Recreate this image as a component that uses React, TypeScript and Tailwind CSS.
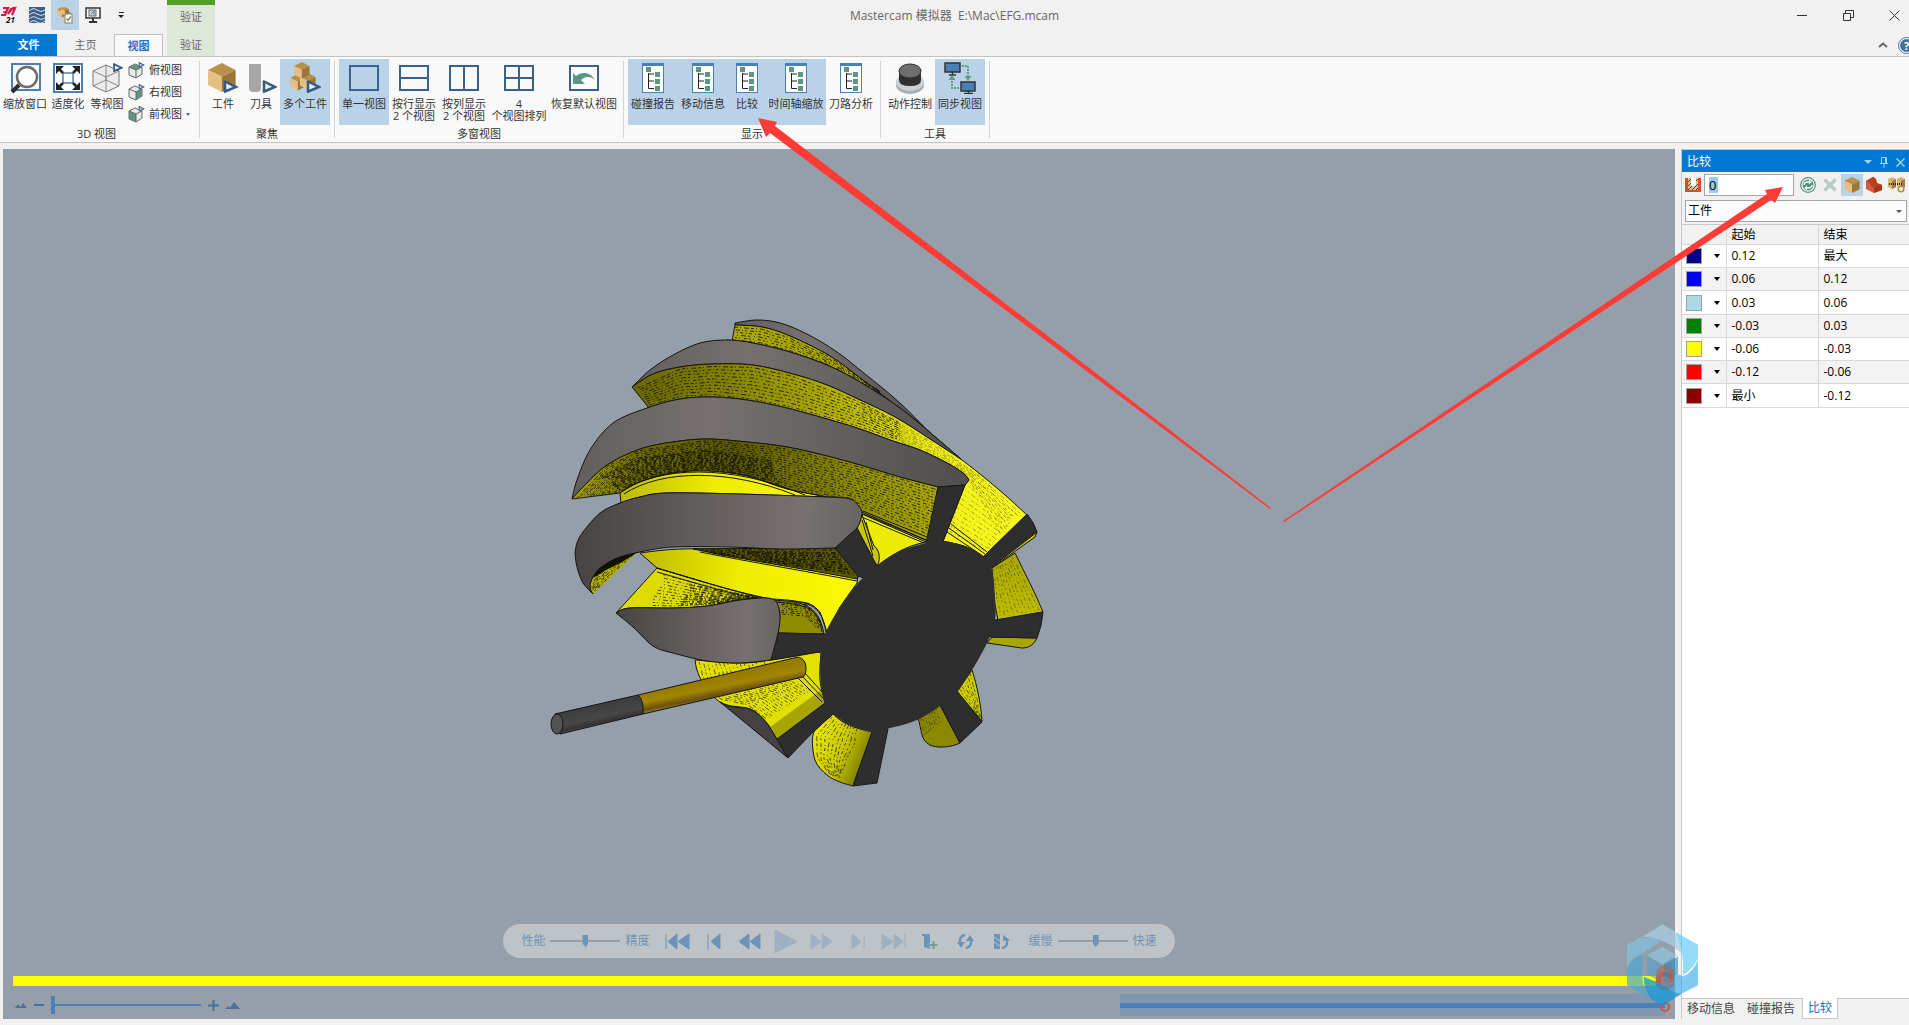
import { useState } from 'react';
import type { ReactNode } from 'react';
import clsx from 'clsx';

type Point = [number, number];

const RANGES = [
  { name: '深蓝', swatch: 'bg-[#00008b]', start: '0.12', end: '最大' },
  { name: '蓝', swatch: 'bg-[#0000ff]', start: '0.06', end: '0.12' },
  { name: '浅蓝', swatch: 'bg-[#add8e6]', start: '0.03', end: '0.06' },
  { name: '绿', swatch: 'bg-[#008000]', start: '-0.03', end: '0.03' },
  { name: '黄', swatch: 'bg-[#ffff00]', start: '-0.06', end: '-0.03' },
  { name: '红', swatch: 'bg-[#ff0000]', start: '-0.12', end: '-0.06' },
  { name: '深红', swatch: 'bg-[#8b0000]', start: '最小', end: '-0.12' },
];

/* ---------- geometry helpers for the 3D scene ---------- */

function curveTo(points: Point[]) {
  let d = '';
  for (let i = 0; i < points.length - 1; i++) {
    const p0 = points[i - 1] ?? points[i];
    const p1 = points[i];
    const p2 = points[i + 1];
    const p3 = points[i + 2] ?? p2;
    const c1 = [p1[0] + (p2[0] - p0[0]) / 6, p1[1] + (p2[1] - p0[1]) / 6];
    const c2 = [p2[0] - (p3[0] - p1[0]) / 6, p2[1] - (p3[1] - p1[1]) / 6];
    d += `C${c1[0].toFixed(1)} ${c1[1].toFixed(1)} ${c2[0].toFixed(1)} ${c2[1].toFixed(1)} ${p2[0]} ${p2[1]}`;
  }
  return d;
}

// every segment is smoothed on its own, corners stay where two segments meet
function shape(...segments: Point[][]) {
  return (
    segments
      .map((seg, i) => `${i === 0 ? 'M' : 'L'}${seg[0][0]} ${seg[0][1]}${curveTo(seg)}`)
      .join('') + 'Z'
  );
}

function pointAt(points: Point[], t: number): Point {
  const pos = t * (points.length - 1);
  const i = Math.min(Math.floor(pos), points.length - 2);
  const f = pos - i;
  return [
    points[i][0] + (points[i + 1][0] - points[i][0]) * f,
    points[i][1] + (points[i + 1][1] - points[i][1]) * f,
  ];
}

const DASHES = ['3 2 1 3 5 2', '2 3 4 2 1 2', '1 2 3 3', '5 2 2 4 1 3', '2 2 1 4 3 2'];

function Hatch({ from, to, count, opacity = 0.8, width = 1 }: {
  from: Point[];
  to: Point[];
  count: number;
  opacity?: number;
  width?: number;
}) {
  return (
    <g fill="none" stroke="#0c0c00" strokeWidth={width} opacity={opacity}>
      {Array.from({ length: count }, (_, n) => {
        const k = (n + 0.5) / count;
        const line = Array.from({ length: 13 }, (_, s): Point => {
          const a = pointAt(from, s / 12);
          const b = pointAt(to, s / 12);
          return [Math.round(a[0] + (b[0] - a[0]) * k), a[1] + (b[1] - a[1]) * k];
        });
        return (
          <path
            key={n}
            d={`M${line[0][0]} ${line[0][1]}${curveTo(line)}`}
            strokeDasharray={DASHES[n % DASHES.length]}
            strokeDashoffset={n * 3}
          />
        );
      })}
    </g>
  );
}

const land2Top: Point[] = [[632, 387], [650, 370], [673, 355], [700, 343], [727, 340], [753, 343], [790, 352], [827, 365], [860, 382], [900, 408], [940, 441], [962, 460]];
const land2Bottom: Point[] = [[632, 387], [653, 374], [680, 367], [713, 364], [753, 365], [793, 374], [827, 385], [860, 400], [895, 417], [930, 439], [962, 460]];
const land3Top: Point[] = [[572, 499], [577, 480], [590, 450], [613, 423], [647, 408], [680, 399], [713, 397], [747, 400], [787, 408], [827, 419], [860, 429], [893, 441], [920, 450], [947, 463], [963, 473], [969, 480]];
const land3Bottom: Point[] = [[938, 487], [900, 477], [860, 465], [827, 456], [787, 447], [747, 442], [707, 439], [673, 442], [640, 449], [607, 465], [583, 487], [572, 499]];
const land4Top: Point[] = [[575, 553], [577, 543], [583, 532], [600, 513], [620, 503], [640, 497], [667, 493], [740, 494], [827, 497], [850, 499], [858, 505], [862, 512], [860, 522], [857, 528]];
const land4Bottom: Point[] = [[835, 548], [780, 549], [730, 547], [673, 547], [640, 552], [617, 558], [600, 568], [593, 577], [590, 587], [593, 594]];
const land5Top: Point[] = [[616, 613], [630, 608], [673, 608], [707, 606], [740, 600], [767, 598], [777, 603], [780, 617], [778, 633], [771, 660]];
const land5Bottom: Point[] = [[771, 660], [740, 663], [707, 661], [673, 653], [653, 646], [633, 627], [616, 613]];
const faceDisc: Point[] = [[926, 543], [943, 541], [967, 547], [983, 557], [992, 570], [995, 597], [995, 620], [987, 643], [972, 670], [957, 691], [940, 706], [917, 720], [890, 728], [870, 731], [850, 725], [833, 714], [824, 702], [820, 670], [821, 653], [825, 634], [840, 607], [858, 583], [877, 566], [900, 551], [926, 543]];

function CutterScene() {
  return (
    <svg className="absolute inset-0 h-full w-full" viewBox="3 149 1672 870" role="img" aria-label="工件">
      <defs>
        <linearGradient id="land" x1="0" x2="1">
          <stop offset="0" stopColor="#625e5d" />
          <stop offset=".35" stopColor="#767170" />
          <stop offset="1" stopColor="#504d4d" />
        </linearGradient>
        <linearGradient id="landLow" x1="0" x2="1">
          <stop offset="0" stopColor="#474443" />
          <stop offset=".5" stopColor="#666160" />
          <stop offset=".8" stopColor="#777271" />
          <stop offset="1" stopColor="#676362" />
        </linearGradient>
        <linearGradient id="flute2" gradientUnits="userSpaceOnUse" x1="632" x2="1020" y1="0" y2="0">
          <stop offset="0" stopColor="#686500" />
          <stop offset=".25" stopColor="#858200" />
          <stop offset=".55" stopColor="#b6b300" />
          <stop offset=".78" stopColor="#f2f018" />
          <stop offset="1" stopColor="#f8f720" />
        </linearGradient>
        <linearGradient id="flute3" x1="0" x2="1">
          <stop offset="0" stopColor="#a5a206" />
          <stop offset=".2" stopColor="#6b6900" />
          <stop offset=".45" stopColor="#5c5a00" />
          <stop offset=".75" stopColor="#8c8900" />
          <stop offset="1" stopColor="#a9a600" />
        </linearGradient>
        <linearGradient id="bright" x1="0" x2="1">
          <stop offset="0" stopColor="#bdba00" />
          <stop offset=".45" stopColor="#eeec00" />
          <stop offset="1" stopColor="#fafa05" />
        </linearGradient>
        <linearGradient id="low" x1="0" x2="1" y1="0" y2=".5">
          <stop offset="0" stopColor="#f5f500" />
          <stop offset=".6" stopColor="#c9c700" />
          <stop offset="1" stopColor="#777500" />
        </linearGradient>
        <linearGradient id="right" x1="0" x2="0" y1="0" y2="1">
          <stop offset="0" stopColor="#a9a700" />
          <stop offset="1" stopColor="#c0be00" />
        </linearGradient>
        <linearGradient id="gold" gradientUnits="userSpaceOnUse" x1="715" x2="720" y1="675" y2="700">
          <stop offset="0" stopColor="#947800" />
          <stop offset=".5" stopColor="#a38500" />
          <stop offset=".8" stopColor="#6b5014" />
          <stop offset="1" stopColor="#ad9420" />
        </linearGradient>
        <linearGradient id="shank" gradientUnits="userSpaceOnUse" x1="597" x2="602" y1="704" y2="726">
          <stop offset="0" stopColor="#3c3c3c" />
          <stop offset=".6" stopColor="#474747" />
          <stop offset=".85" stopColor="#343232" />
          <stop offset="1" stopColor="#8a8584" />
        </linearGradient>
      </defs>

      {/* upper flutes and lands */}
      <g stroke="#141414" strokeWidth="1" strokeLinejoin="round">
        <path
          d={shape([[735, 323], [757, 320], [780, 323], [807, 334], [837, 352], [865, 374], [900, 403], [937, 440]], [[895, 406], [860, 378], [830, 356], [790, 336], [762, 327], [735, 325]])}
          fill="url(#land)"
        />
        <path
          d={shape([[735, 325], [762, 327], [790, 336], [830, 356], [860, 378], [895, 405], [937, 441], [962, 460]], [...land2Top].reverse().slice(0, 8), [[732, 341], [735, 325]])}
          fill="#aaa700"
        />
        <Hatch from={[[735, 326], [762, 328], [790, 337], [830, 357], [880, 391]]} to={[[732, 341], [760, 344], [790, 352], [827, 365], [880, 394]]} count={6} />
        <path d={shape(land2Top, [...land2Bottom].reverse())} fill="url(#land)" />
        <path
          d={shape(land2Bottom, [[962, 460], [980, 474], [1005, 495], [1027, 515]], [[983, 557], [967, 547], [943, 541]], [[965, 485], [969, 480]], [...land3Top].reverse().slice(0, 12), [[649, 408], [632, 387]])}
          fill="url(#flute2)"
        />
        <Hatch
          from={[[637, 387], [680, 368], [713, 365], [753, 366], [793, 375], [860, 401], [900, 422]]}
          to={[[650, 406], [680, 398], [713, 396], [753, 401], [793, 409], [860, 428], [900, 441]]}
          count={10}
        />
        <Hatch from={[[860, 401], [930, 440], [980, 476], [1021, 512]]} to={[[860, 428], [915, 448], [965, 475], [1000, 536]]} count={9} opacity={0.35} />
        <Hatch from={[[972, 474], [1018, 513]]} to={[[946, 532], [985, 553]]} count={13} opacity={0.35} />
        <path d="M951 524L987 552M949 528L985 554M947 532L983 556" fill="none" />
        <path d={shape(land3Top, [[969, 480], [965, 485]], land3Bottom)} fill="url(#land)" />
      </g>

      {/* third flute with its bright floor */}
      <g stroke="#141414" strokeWidth="1" strokeLinejoin="round">
        <path
          d={shape([...land3Bottom].reverse(), [[938, 487], [928, 541]], [[862, 512], [850, 499], [827, 497]], [[787, 489], [747, 476], [707, 471], [673, 473], [640, 482], [620, 493]], [[620, 493], [572, 499]])}
          fill="url(#flute3)"
        />
        <Hatch
          from={[[576, 498], [607, 466], [640, 450], [707, 440], [787, 448], [860, 466], [936, 488]]}
          to={[[615, 493], [620, 492], [645, 479], [707, 470], [787, 487], [862, 508], [929, 536]]}
          count={17}
        />
        <Hatch
          from={[[600, 476], [640, 457], [707, 450], [770, 460]]}
          to={[[620, 491], [645, 479], [707, 469], [780, 483]]}
          count={9}
          width={2}
          opacity={0.6}
        />
        <path
          d={shape([[620, 493], [640, 482], [673, 473], [707, 471], [747, 476], [787, 489], [827, 497]], [[740, 494], [667, 493], [640, 497], [621, 503]])}
          fill="url(#bright)"
        />
        <path d="M622 491C660 466 730 464 805 495M624 494C662 469 730 469 795 495" fill="none" />
        <path d="M862 514L926 542C905 546 890 556 877 566L866 530Z" fill="#eceb04" />
        <path d="M863 511L927 537M863 514L926 540M864 518L924 543" fill="none" />
        <path d="M862 515L857 528L872 558L877 566C882 558 878 548 874 546Z" fill="#c9c700" />
        <path d="M866 522L873 550M862 520L873 556" fill="none" />
      </g>

      {/* fourth flute */}
      <g stroke="#141414" strokeWidth="1" strokeLinejoin="round">
        <path d="M586 586L593 594L637 553L615 556L598 566L589 578Z" fill="#b4b100" stroke="none" />
        <Hatch from={[[617, 557], [600, 568], [591, 587]]} to={[[634, 555], [614, 573], [595, 592]]} count={8} width={1} />
        <path d="M638 552L617 556L598 566L593 578L606 570L622 562Z" fill="#111100" stroke="none" />
        <path d={shape([[640, 553], [683, 549], [780, 549], [835, 548]], [[858, 576], [857, 583]], [[840, 607], [827, 632]], [[820, 612], [807, 603], [773, 600], [740, 593], [700, 581], [657, 568]])} fill="url(#bright)" />
        <path d="M693 549L835 548L858 576L857 579C800 568 745 560 693 549Z" fill="#5d5b00" />
        <Hatch from={[[700, 550], [770, 549], [834, 549]]} to={[[720, 555], [790, 566], [856, 576]]} count={11} />
        <Hatch from={[[740, 551], [800, 552], [836, 552]]} to={[[770, 562], [810, 568], [852, 574]]} count={7} width={2} opacity={0.6} />
        <path d="M700 552C750 562 805 571 857 581" fill="none" />
        <path
          d={shape([[657, 568], [700, 581], [740, 592], [773, 600], [777, 603]], [[767, 598], [740, 600], [707, 606], [673, 608], [630, 608], [616, 613]])}
          fill="#dddb00"
        />
        <Hatch from={[[664, 573], [700, 583], [735, 592], [765, 598]]} to={[[650, 607], [673, 607], [707, 605], [750, 599]]} count={11} opacity={0.7} />
        <Hatch from={[[690, 583], [735, 593], [768, 599]]} to={[[680, 606], [715, 604], [750, 600]]} count={8} width={2} opacity={0.6} />
        <path d="M656 568C700 580 735 593 775 600M657 572C700 584 735 596 768 600" fill="none" />
        <path d="M773 600C800 602 818 602 824 634L778 633L780 615Z" fill="#8f8c00" />
        <Hatch from={[[778, 601], [807, 604], [822, 622]]} to={[[781, 615], [805, 617], [818, 630]]} count={7} />
        <path d="M773 599C806 601 822 603 826 632M776 602C804 605 818 606 822 632" fill="none" />
      </g>

      {/* right side teeth */}
      <g stroke="#141414" strokeWidth="1" strokeLinejoin="round">
        <path d="M1037 532L1035 537L993 567L990 560Z" fill="#c4c200" />
        <path d="M992 568L1015 553C1024 572 1035 592 1043 612L998 620L994 600Z" fill="url(#right)" />
        <Hatch from={[[1013, 556], [1028, 584], [1041, 610]]} to={[[993, 569], [995, 596], [999, 618]]} count={10} opacity={0.4} />
        <path d="M992 637L1037 638C1034 644 1030 648 1022 648L987 643Z" fill="#a8a600" />
        <path d="M972 670C977 686 981 704 982 721L957 692Z" fill="#cfcd00" />
        <Hatch from={[[971, 672], [977, 695], [981, 718]]} to={[[958, 690], [967, 702], [978, 716]]} count={6} opacity={0.6} />
        <path d="M918 718L940 705L960 743C950 748 936 748 930 745C920 740 922 730 918 718Z" fill="#8c8900" />
        <Hatch from={[[919, 719], [924, 736]]} to={[[937, 707], [941, 722]]} count={8} opacity={0.5} />
      </g>

      {/* lower teeth */}
      <g stroke="#141414" strokeWidth="1" strokeLinejoin="round">
        <path
          d={shape([[695, 660], [697, 670], [702, 681], [715, 698], [727, 705], [747, 708], [757, 713], [770, 727], [777, 739]], [[825, 703], [820, 680], [821, 653]], [[818, 652], [771, 660], [740, 663], [695, 660]])}
          fill="#e2e000"
        />
        <path d="M777 739L825 703L821 690L770 727Z" fill="#a8a500" stroke="none" />
        <Hatch
          from={[[697, 662], [702, 679], [718, 699], [747, 706], [766, 720]]}
          to={[[770, 662], [775, 672], [790, 680], [800, 684], [812, 690]]}
          count={18}
          opacity={0.65}
        />
        <path d="M796 676L822 702M800 674L824 699M803 671L824 694" fill="none" />
        <path d="M720 702C728 707 738 708 747 708C764 714 770 728 777 739L788 758Z" fill="#444142" />
        <path
          d={shape([[833, 714], [822, 724], [813, 735], [815, 760], [827, 775], [840, 782], [853, 786]], [[872, 732], [857, 728], [843, 722], [833, 714]])}
          fill="url(#low)"
        />
        <Hatch from={[[831, 716], [815, 735], [816, 758], [830, 775]]} to={[[858, 729], [856, 745], [848, 760], [840, 778]]} count={10} opacity={0.7} />
      </g>

      {/* flat front face: teeth and core */}
      <g fill="#2e2e2e" stroke="#1a1a1a" strokeWidth="1" strokeLinejoin="round">
        <path d="M938 487L965 485L944 539L935 560L926 543Z" />
        <path d="M983 557L1027 514Q1034 522 1037 532L992 567L975 575Z" />
        <path d="M995 620L1043 612Q1042 626 1037 638L992 637L975 635Z" />
        <path d="M957 691L982 722L960 743L940 705L945 690Z" />
        <path d="M872 732L853 786L877 783L888 729L880 715Z" />
        <path d="M777 739L825 703L840 705L833 714L813 732L788 758Z" />
        <path d="M778 633L825 634L835 645L819 652L771 660Z" />
        <path d="M857 528L835 548L858 576L870 580L877 566Z" />
        <path d={shape(faceDisc)} stroke="none" />
      </g>

      <g stroke="#141414" strokeWidth="1" strokeLinejoin="round">
        <path d={shape(land4Top, [[857, 528], [835, 548]], land4Bottom, [[593, 594], [583, 583], [577, 567], [575, 553]])} fill="url(#landLow)" />
        <path d={shape(land5Top, land5Bottom)} fill="url(#landLow)" />
        <path d="M638 695L798 657Q806 659 806 668Q806 675 803 677L643 714Z" fill="url(#gold)" />
        <path d="M555 714L638 695Q644 700 643 714L560 734Z" fill="url(#shank)" />
        <ellipse cx="557" cy="724" rx="6" ry="10" fill="#535353" />
      </g>
    </svg>
  );
}

/* ---------- ribbon icons ---------- */

function Icon32({ children }: { children: ReactNode }) {
  return (
    <svg width="32" height="32" viewBox="0 0 32 32" className="shrink-0" fill="none" aria-hidden="true">
      {children}
    </svg>
  );
}

function ViewArrow({ x, y, s = 1 }: { x: number; y: number; s?: number }) {
  return (
    <g transform={`translate(${x} ${y}) scale(${s})`} fill="#e8edf2" stroke="#355b85" strokeWidth="2.500">
      <path d="M2 1L14 7L2 12" />
      <path d="M3 1V12" />
    </g>
  );
}

function Box({ x, y, s }: { x: number; y: number; s: number }) {
  return (
    <g transform={`translate(${x} ${y}) scale(${s})`}>
      <path d="M10 0L20 5L10 10L0 5Z" fill="#b98f4c" />
      <path d="M0 5L10 10V21L0 16Z" fill="#e6c081" />
      <path d="M20 5L10 10V21L20 16Z" fill="#9c7638" />
    </g>
  );
}

const ZoomWindowIcon = () => (
  <Icon32>
    <rect x="3" y="2" width="28" height="26" stroke="#4a80b8" strokeWidth="2" />
    <circle cx="18" cy="15" r="10" fill="#fff" stroke="#6b6b6b" strokeWidth="2.500" />
    <path d="M10 23L3 30" stroke="#2d2d2d" strokeWidth="4" />
  </Icon32>
);

const FitIcon = () => (
  <Icon32>
    <rect x="2" y="2" width="28" height="28" fill="#fff" stroke="#4a80b8" strokeWidth="2" />
    <rect x="11" y="11" width="10" height="10" stroke="#4a80b8" strokeWidth="1.500" />
    <path d="M11 11L5 5M21 11L27 5M11 21L5 27M21 21L27 27" stroke="#222" strokeWidth="2.500" />
    <path d="M4 4H12L4 12ZM28 4H20L28 12ZM4 28H12L4 20ZM28 28H20L28 20Z" fill="#222" />
  </Icon32>
);

const IsoIcon = () => (
  <Icon32>
    <path d="M2 9L15 3L28 9V24L15 30L2 24Z" fill="#ececec" stroke="#777" />
    <path d="M2 9L15 15L28 9M15 15V30M2 24L15 18L28 24M15 3V18" stroke="#888" />
    <ViewArrow x={21} y={1} s={0.7} />
  </Icon32>
);

const StockIcon = () => (
  <Icon32>
    <Box x={1} y={1} s={1.38} />
    <ViewArrow x={15} y={18} />
  </Icon32>
);

const ToolIcon = () => (
  <Icon32>
    <path d="M4 2H16V26Q16 30 12 30H8Q4 30 4 26Z" fill="#a6a6a6" />
    <ViewArrow x={16} y={18} />
  </Icon32>
);

const MultiStockIcon = () => (
  <Icon32>
    <Box x={1} y={12} s={0.78} />
    <Box x={11} y={11} s={0.78} />
    <Box x={5} y={0} s={0.78} />
    <ViewArrow x={16} y={18} />
  </Icon32>
);

function LayoutIcon({ d = '' }: { d?: string }) {
  return (
    <Icon32>
      <path d={`M2 4H30V28H2Z${d}`} stroke="#3a6189" strokeWidth="2" />
    </Icon32>
  );
}

const ResetViewIcon = () => (
  <Icon32>
    <path d="M2 4H30V28H2Z" fill="#fff" stroke="#3a6189" strokeWidth="2" />
    <path d="M5 11L8 14C14 9 23 10 27 18C23 14 17 14 13 18L17 22H5Z" fill="#5d9782" />
  </Icon32>
);

const ReportIcon = () => (
  <Icon32>
    <rect x="5.500" y="1.500" width="21" height="29" fill="#fff" stroke="#4a80b8" />
    <rect x="5" y="1" width="22" height="3" fill="#4a80b8" />
    <path d="M11.500 11V26.500H17M11.500 12H17M11.500 19H17" stroke="#222" />
    <path d="M9 5H14V10H9ZM18 10H23V15H18ZM18 17H23V22H18ZM18 24H23V29H18Z" fill="#5d9782" />
  </Icon32>
);

const KnobIcon = () => (
  <Icon32>
    <ellipse cx="16" cy="23" rx="14" ry="9" fill="#a9adb0" />
    <ellipse cx="16" cy="20" rx="14" ry="9" fill="#cdd1d4" />
    <path d="M5 9V18Q5 24 16 24T27 18V9Z" fill="#303030" />
    <ellipse cx="16" cy="9" rx="11" ry="7" fill="#6f6f6f" stroke="#303030" />
  </Icon32>
);

const SyncIcon = () => (
  <Icon32>
    <path d="M1 1H16V10H1ZM17 20H31V29H17Z" fill="#4a80b8" stroke="#333" strokeWidth="1.500" />
    <path d="M8.500 10V13M5 13H12M24.500 29V32M20 31.500H29" stroke="#333" strokeWidth="1.500" />
    <path d="M18 4H24V14M15 26H8V18" stroke="#5fa084" strokeWidth="2" strokeDasharray="2 1" />
    <path d="M20.500 14H27.500L24 19ZM4.500 18H11.500L8 13Z" fill="#5fa084" />
  </Icon32>
);

function SmallCube({ face }: { face: string }) {
  return (
    <svg width="17" height="18" viewBox="0 0 17 18" fill="none" aria-hidden="true">
      <path d="M1 6L7 3L14 6V13L8 17L1 14Z" fill="#e8eae9" stroke="#666" />
      <path d={face} fill="#5d9782" />
      <path d="M1 6L8 9L14 6M8 9V17" stroke="#666" />
      <ViewArrow x={10} y={1} s={0.42} />
    </svg>
  );
}

/* ---------- ribbon ---------- */

function RibbonButton({ label, icon, width, active }: {
  label: ReactNode;
  icon: ReactNode;
  width: string;
  active?: boolean;
}) {
  return (
    <button
      type="button"
      aria-pressed={active}
      className={clsx(
        'flex h-[66px] flex-col items-center gap-1 pt-[3px] leading-[12px] whitespace-nowrap text-[#333]',
        width,
        active ? 'bg-[#bad2e7]' : 'hover:bg-[#d9e7f3]',
      )}
    >
      {icon}
      <span>{label}</span>
    </button>
  );
}

function RibbonGroup({ title, children, pad = 'px-1' }: { title: string; children: ReactNode; pad?: string }) {
  return (
    <>
      <section className={clsx('flex flex-col pt-[2px]', pad)}>
        <div className="flex">{children}</div>
        <h2 className="text-center leading-[17px] text-[#333]">{title}</h2>
      </section>
      <div className="my-1 w-px bg-[#d4d4d4]" />
    </>
  );
}

const SMALL_VIEWS = [
  { label: '俯视图', face: 'M1 6L7 3L14 6L8 9Z' },
  { label: '右视图', face: 'M8 9L14 6V13L8 17Z' },
  { label: '前视图', face: 'M1 6L8 9V17L1 14Z', more: true },
];

function Ribbon() {
  return (
    <div className="flex h-[86px] shrink-0 overflow-hidden border-b border-[#c2c2c2] bg-[#f9f9f9] text-[11px]">
      <RibbonGroup title="3D 视图" pad="pl-[2px] pr-2">
        <RibbonButton width="w-[46px]" label="缩放窗口" icon={<ZoomWindowIcon />} />
        <RibbonButton width="w-[40px]" label="适度化" icon={<FitIcon />} />
        <RibbonButton width="w-[38px]" label="等视图" icon={<IsoIcon />} />
        <div className="flex w-[65px] flex-col pl-[2px]">
          {SMALL_VIEWS.map((view) => (
            <button key={view.label} type="button" className="flex h-[22px] items-center gap-1 whitespace-nowrap text-[#333]">
              <SmallCube face={view.face} />
              {view.label}
              {view.more && <span className="border-x-2 border-t-[3px] border-x-transparent border-t-[#666]" />}
            </button>
          ))}
        </div>
      </RibbonGroup>
      <RibbonGroup title="聚焦">
        <RibbonButton width="w-[38px]" label="工件" icon={<StockIcon />} />
        <RibbonButton width="w-[38px]" label="刀具" icon={<ToolIcon />} />
        <RibbonButton width="w-[50px]" label="多个工件" icon={<MultiStockIcon />} active />
      </RibbonGroup>
      <RibbonGroup title="多窗视图">
        <RibbonButton width="w-[50px]" label="单一视图" icon={<LayoutIcon />} active />
        <RibbonButton width="w-[50px]" label={<>按行显示<br />2 个视图</>} icon={<LayoutIcon d="M2 16H30" />} />
        <RibbonButton width="w-[50px]" label={<>按列显示<br />2 个视图</>} icon={<LayoutIcon d="M16 4V28" />} />
        <RibbonButton width="w-[60px]" label={<>4<br />个视图排列</>} icon={<LayoutIcon d="M2 16H30M16 4V28" />} />
        <RibbonButton width="w-[70px]" label="恢复默认视图" icon={<ResetViewIcon />} />
      </RibbonGroup>
      <RibbonGroup title="显示">
        <RibbonButton width="w-[50px]" label="碰撞报告" icon={<ReportIcon />} active />
        <RibbonButton width="w-[50px]" label="移动信息" icon={<ReportIcon />} active />
        <RibbonButton width="w-[38px]" label="比较" icon={<ReportIcon />} active />
        <RibbonButton width="w-[60px]" label="时间轴缩放" icon={<ReportIcon />} active />
        <RibbonButton width="w-[50px]" label="刀路分析" icon={<ReportIcon />} />
      </RibbonGroup>
      <RibbonGroup title="工具">
        <RibbonButton width="w-[50px]" label="动作控制" icon={<KnobIcon />} />
        <RibbonButton width="w-[50px]" label="同步视图" icon={<SyncIcon />} active />
      </RibbonGroup>
    </div>
  );
}

/* ---------- title bar and tabs ---------- */

function TitleBar() {
  return (
    <header className="grid h-[34px] shrink-0 grid-cols-[1fr_auto_1fr]">
      <div className="flex items-start">
        <svg width="17" height="30" viewBox="0 0 17 30" className="mr-[6px]" fill="none" aria-hidden="true">
          <path d="M3 8H8L5 15H1M8 14L11 9L15 8L12 15" stroke="#d6174a" strokeWidth="2.200" />
          <path d="M3 12H7M9 13L14 7" stroke="#d6174a" strokeWidth="1.500" />
          <text x="6" y="23" fontSize="8" fontWeight="bold" fontStyle="italic" fill="#111">21</text>
        </svg>
        <button type="button" aria-label="Mastercam" className="flex h-[30px] w-[28px] items-center justify-center">
          <svg width="16" height="16" viewBox="0 0 16 16">
            <rect width="16" height="16" fill="#3d5f86" />
            <path d="M0 4Q4 0 8 3T16 3M0 8Q4 4 8 7T16 7M0 12Q4 8 8 11T16 11M0 16Q4 12 8 15T16 14" fill="none" stroke="#d9e4ee" strokeWidth="1" />
          </svg>
        </button>
        <button type="button" aria-label="工件" className="flex h-[30px] w-[28px] items-center justify-center bg-[#bad2e7]">
          <svg width="18" height="18" viewBox="0 0 18 18" fill="none">
            <Box x={1} y={1} s={0.5} />
            <Box x={5} y={1} s={0.4} />
            <rect x="9" y="8" width="7" height="9" fill="#fff" stroke="#a37e42" />
            <path d="M11 8V6.500H14V8" stroke="#777" />
            <path d="M10.500 12.500L12 14.500L15 10.500" stroke="#4e9a78" strokeWidth="1.300" />
          </svg>
        </button>
        <button type="button" aria-label="视图" className="flex h-[30px] w-[28px] items-center justify-center">
          <svg width="16" height="16" viewBox="0 0 16 16" fill="none">
            <rect x="1" y="1" width="14" height="10" fill="#fff" stroke="#333" strokeWidth="1.500" />
            <rect x="4" y="3" width="7" height="6" fill="#cdd3d8" stroke="#666" />
            <path d="M6 7L9 4V8" stroke="#4a80b8" />
            <path d="M8 11V14M4 15H12" stroke="#333" strokeWidth="2" />
          </svg>
        </button>
        <button type="button" aria-label="自定义" className="flex h-[30px] w-[28px] flex-col items-center justify-center gap-[2px]">
          <span className="h-px w-[5px] bg-[#222]" />
          <span className="border-x-[3px] border-t-[3px] border-x-transparent border-t-[#222]" />
        </button>
        <div className="ml-8 h-[34px] w-[48px] border-t-[5px] border-[#539e29] bg-[#dde8d8] text-center text-[11px] leading-[24px] text-[#666]">
          验证
        </div>
      </div>
      <h1 className="text-xs leading-[32px] whitespace-pre text-[#666]">{'Mastercam 模拟器  E:\\Mac\\EFG.mcam'}</h1>
      <div className="flex justify-end text-[#333]">
        <button type="button" aria-label="最小化" className="flex h-[30px] w-[46px] items-center justify-center">
          <span className="h-px w-[10px] bg-[#333]" />
        </button>
        <button type="button" aria-label="还原" className="flex h-[30px] w-[46px] items-center justify-center">
          <svg width="11" height="11" viewBox="0 0 11 11" fill="none" stroke="currentColor">
            <path d="M.5 3.500H7.500V10.500H.5ZM2.500 3.500V.5H10.500V7.500H7.500" />
          </svg>
        </button>
        <button type="button" aria-label="关闭" className="ml-2 flex h-[30px] w-[30px] items-center justify-center">
          <svg width="11" height="11" viewBox="0 0 11 11" stroke="currentColor">
            <path d="M.5 .5L10.500 10.500M10.500 .5L.5 10.500" />
          </svg>
        </button>
      </div>
    </header>
  );
}

function TabBar() {
  return (
    <nav className="relative flex h-[23px] shrink-0 overflow-hidden border-b border-[#c2c2c2] text-[11px] leading-[22px] text-[#666]">
      <button type="button" className="w-[57px] bg-[#0078d4] font-bold text-white">文件</button>
      <button type="button" className="w-[57px]">主页</button>
      <button type="button" className="z-10 -mb-px h-[23px] w-[49px] border border-b-0 border-[#c2c2c2] bg-[#f9f9f9] font-bold text-[#1b74c8]">
        视图
      </button>
      <button type="button" className="ml-1 w-[48px] bg-[#dde8d8]">验证</button>
      <div className="ml-auto flex items-center gap-[10px]">
        <button type="button" aria-label="折叠功能区">
          <svg width="10" height="6" viewBox="0 0 10 6" fill="none">
            <path d="M1 5L5 1.500L9 5" stroke="#666" strokeWidth="2" />
          </svg>
        </button>
        <button type="button" aria-label="帮助" className="-mr-[6px]">
          <svg width="17" height="17" viewBox="0 0 17 17">
            <circle cx="8.500" cy="8.500" r="8" fill="#fff" stroke="#44709f" />
            <circle cx="8.500" cy="8.500" r="6.500" fill="#44709f" />
            <text x="8.500" y="12.500" fontSize="11" fontWeight="bold" textAnchor="middle" fill="#fff">?</text>
          </svg>
        </button>
      </div>
    </nav>
  );
}

/* ---------- viewport ---------- */

const TRANSPORT = [
  { label: '回到开始', d: 'M1 2V17M12 2L3 9.500L12 17ZM24 2L13 9.500L24 17Z', w: 25 },
  { label: '上一步', d: 'M1 2V17M13 2L4 9.500L13 17Z', w: 14 },
  { label: '快退', d: 'M11 2L1 9.500L11 17ZM22 2L12 9.500L22 17Z', w: 23 },
  { label: '播放', d: 'M1 0V23L23 11.500Z', w: 24, h: 23, off: true },
  { label: '快进', d: 'M1 2L11 9.500L1 17ZM12 2L22 9.500L12 17Z', w: 23, off: true },
  { label: '下一步', d: 'M1 2L10 9.500L1 17ZM13 2V17', w: 14, off: true },
  { label: '到结尾', d: 'M1 2L12 9.500L1 17ZM13 2L22 9.500L13 17ZM24 2V17', w: 25, off: true },
];

function SpeedSlider({ label }: { label: string }) {
  return (
    <input
      type="range"
      aria-label={label}
      defaultValue={label === '速度' ? 55 : 50}
      className="mx-[5px] h-3 w-[70px] appearance-none bg-[linear-gradient(#999ea3,#999ea3)] bg-[length:100%_2px] bg-center bg-no-repeat [&::-webkit-slider-thumb]:h-3 [&::-webkit-slider-thumb]:w-[6px] [&::-webkit-slider-thumb]:appearance-none [&::-webkit-slider-thumb]:bg-[#6d93b8] [&::-webkit-slider-thumb]:[clip-path:polygon(0_0,100%_0,100%_70%,50%_100%,0_70%)]"
    />
  );
}

function PlaybackBar() {
  return (
    <div className="flex h-[34px] items-center self-center rounded-full bg-[#bec3c7] px-[18px] text-xs text-[#6d93b8]">
      <span>性能</span>
      <SpeedSlider label="精度" />
      <span>精度</span>
      <div className="mr-[9px] ml-[10px] flex items-center">
        {TRANSPORT.map((item) => (
          <button key={item.label} type="button" aria-label={item.label} disabled={item.off} className="flex w-9 justify-center">
            <svg width={item.w} height={item.h ?? 19} viewBox={`0 0 ${item.w} ${item.h ?? 19}`} className={item.off ? 'text-[#9fb0c2]' : 'text-[#6d93b8]'}>
              <path d={item.d} fill="currentColor" stroke="currentColor" strokeWidth="1" />
            </svg>
          </button>
        ))}
        <button type="button" aria-label="换刀停止" className="flex w-9 justify-center">
          <svg width="17" height="19" viewBox="0 0 17 19" fill="none">
            <path d="M1 2H9V17L3 15V4H1Z" fill="#6d93b8" />
            <path d="M12.500 9V17M8.500 13H16.500" stroke="#bec3c7" strokeWidth="4" />
            <path d="M12.500 9V17M8.500 13H16.500" stroke="#6f9f8e" strokeWidth="2" />
          </svg>
        </button>
        <button type="button" aria-label="循环" className="flex w-9 justify-center">
          <svg width="17" height="17" viewBox="0 0 17 17" fill="none" stroke="#6d93b8" strokeWidth="2.500">
            <path d="M8 2Q2 3 3 10M9 15Q15 14 14 7" />
            <path d="M0 9L4 15L8 9ZM9 8L13 2L17 8Z" fill="#6d93b8" stroke="none" />
          </svg>
        </button>
        <button type="button" aria-label="循环刀具" className="flex w-9 justify-center">
          <svg width="17" height="17" viewBox="0 0 17 17" fill="none" stroke="#6d93b8" strokeWidth="2.500">
            <path d="M1 1H7V16H1Z" fill="#6d93b8" stroke="none" />
            <path d="M1 4L7 8M1 9L7 13" stroke="#bec3c7" strokeWidth="1" />
            <path d="M9 15Q15 14 14 7" />
            <path d="M10 8L10 2L17 7Z" fill="#6d93b8" stroke="none" />
          </svg>
        </button>
      </div>
      <span>缓慢</span>
      <SpeedSlider label="速度" />
      <span>快速</span>
    </div>
  );
}

function Timeline() {
  return (
    <>
      <div className="relative mx-[10px] mt-[18px] flex h-[10px]">
        <div className="mr-[9px] flex-1 bg-[#ffff00]" />
        <svg width="20" height="20" viewBox="0 0 20 20" className="absolute -top-[5px] -right-[10px]" fill="none">
          <circle cx="10" cy="10" r="7" stroke="#dc5030" strokeWidth="5" />
        </svg>
      </div>
      <div className="relative mx-[10px] mt-2 mb-[3px] flex h-[22px] items-center">
        <svg width="12" height="6" viewBox="0 0 12 6" className="ml-[2px]" fill="#4c7299">
          <path d="M0 6L3 2L6 6ZM5 6L8 1L12 6Z" />
        </svg>
        <button type="button" aria-label="缩小" className="ml-[7px] h-[2px] w-[10px] bg-[#44709f]" />
        <input
          type="range"
          aria-label="时间轴缩放"
          defaultValue={0}
          className="ml-[7px] h-[18px] w-[150px] appearance-none bg-[linear-gradient(#4a80b8,#4a80b8)] bg-[length:100%_2px] bg-center bg-no-repeat [&::-webkit-slider-thumb]:h-[18px] [&::-webkit-slider-thumb]:w-1 [&::-webkit-slider-thumb]:appearance-none [&::-webkit-slider-thumb]:bg-[#4a80b8]"
        />
        <button type="button" aria-label="放大" className="ml-[7px]">
          <svg width="11" height="11" viewBox="0 0 11 11">
            <path d="M5.500 0V11M0 5.500H11" stroke="#44709f" strokeWidth="2" />
          </svg>
        </button>
        <svg width="15" height="7" viewBox="0 0 15 7" className="ml-[6px]" fill="#4c7299">
          <path d="M0 7L3 4L6 7ZM4 7L9 0L15 7Z" />
        </svg>
        <div className="ml-auto flex h-[22px] w-[33%] items-center bg-[#8097b0]">
          <div className="h-[5px] w-full bg-[#4a80b8]" />
        </div>
        <svg width="10" height="10" viewBox="0 0 10 10" className="absolute top-2 -right-[5px]" fill="none">
          <circle cx="5" cy="5" r="4" stroke="#d0533c" strokeWidth="2" />
        </svg>
      </div>
    </>
  );
}

function Watermark() {
  return (
    <svg className="pointer-events-none absolute right-[211px] bottom-[13px] h-[82px] w-[71px]" viewBox="0 0 213 245" aria-hidden="true">
      <path d="M107 0L148 25Q165 55 166 90Q118 42 45 38Z" fill="#a9cbe3" opacity=".75" />
      <path d="M148 25L213 62V104Q195 138 168 153Q172 80 148 25Z" fill="#4cc3f8" opacity=".6" />
      <path d="M213 108V183L165 208Q120 205 107 178L153 150L168 157Q196 145 213 108Z" fill="#2ba7e8" opacity=".6" />
      <path d="M50 158L107 181Q130 206 165 208L107 245L72 224Q50 195 50 158Z" fill="#1998d8" opacity=".8" />
      <path d="M0 135Q12 105 46 92V158Q48 192 66 221L0 183Z" fill="#4ba6d6" opacity=".7" />
      <path d="M0 62L38 41Q75 38 104 50L46 88Q12 100 0 130Z" fill="#82c0e0" opacity=".7" />
      <path d="M107 68L150 93L107 120L60 93Z" fill="#8dc3e0" opacity=".75" />
      <path d="M60 96L105 122V176L60 150Z" fill="#4f9fcb" opacity=".55" />
      <path d="M153 97L109 122V176L153 150Z" fill="#1f8dc4" opacity=".6" />
      <circle cx="115" cy="152" r="21" fill="none" stroke="#d8502f" strokeWidth="15" opacity=".45" />
    </svg>
  );
}

/* ---------- compare panel ---------- */

function ComparePanel() {
  const [tolerance, setTolerance] = useState('0');

  return (
    <aside className="ml-[6px] flex w-[228px] shrink-0 flex-col border-t border-l border-[#c8c8c8]">
      <div className="flex h-[22px] shrink-0 items-center gap-[8px] bg-[#0078d4] pt-[2px] pr-1 pl-[5px] text-xs text-white">
        <h2 className="flex-1">比较</h2>
        <button type="button" aria-label="选项" className="border-x-4 border-t-4 border-x-transparent border-t-[#a8d2f2]" />
        <button type="button" aria-label="固定">
          <svg width="8" height="11" viewBox="0 0 8 11" fill="none" stroke="#a8d2f2">
            <path d="M1.500 6.500V.5H6.500V6.500M5.500 1V6M0 6.500H8M4 7V11" />
          </svg>
        </button>
        <button type="button" aria-label="关闭面板">
          <svg width="9" height="9" viewBox="0 0 9 9" stroke="#a8d2f2" strokeWidth="1.300">
            <path d="M.5 .5L8.500 8.500M8.500 .5L.5 8.500" />
          </svg>
        </button>
      </div>

      <div className="flex h-[26px] shrink-0 items-center bg-[#f1f1f1] pl-[3px]">
        <svg width="16" height="14" viewBox="0 0 16 14" className="mr-[3px]" fill="none" aria-hidden="true">
          <path d="M0 0H16V14H0Z" fill="#d2502e" />
          <path d="M3 0H13V12H3Z" fill="#d8c48c" />
          <path d="M3 4L6 1M3 8L6 5M3 12L7 8M7 12L13 6M10 4L13 1M11 12L13 10" stroke="#4c4330" />
          <path d="M6 0H11V7Q8 10 6 7Z" fill="#fff" />
        </svg>
        <div className="flex h-[22px] w-[90px] items-center border border-[#a5a5a5] bg-white px-1">
          <input
            aria-label="公差"
            value={tolerance}
            size={1}
            onChange={(e) => setTolerance(e.target.value)}
            className="w-[9px] bg-[#99c9ef] text-[13px] leading-[16px] outline-none"
          />
        </div>
        <button type="button" aria-label="刷新" className="ml-[5px] flex w-[18px] justify-center">
          <svg width="16" height="16" viewBox="0 0 16 16" fill="none">
            <circle cx="8" cy="8" r="7.300" fill="#fff" stroke="#4f8f79" strokeWidth="1.200" />
            <circle cx="8" cy="8" r="5.500" fill="#4f8f79" />
            <path d="M4 8Q4 5 8 5H10M12 8Q12 11 8 11H6" stroke="#fff" strokeWidth="1.500" />
            <path d="M9 3L12 5L9 7.500ZM7 13L4 11L7 8.500Z" fill="#fff" />
          </svg>
        </button>
        <button type="button" aria-label="清除" disabled className="ml-1 flex w-[18px] justify-center">
          <svg width="14" height="14" viewBox="0 0 14 14" stroke="#b5cdc4" strokeWidth="3.500">
            <path d="M1.500 1.500L12.500 12.500M12.500 1.500L1.500 12.500" />
          </svg>
        </button>
        <button type="button" aria-label="工件" aria-pressed="true" className="ml-[2px] flex h-[22px] w-[22px] items-center justify-center bg-[#bad2e7]">
          <svg width="16" height="16" viewBox="0 0 20 21"><Box x={0} y={0} s={1} /></svg>
        </button>
        <button type="button" aria-label="零件" className="ml-[3px]">
          <svg width="16" height="16" viewBox="0 0 16 16">
            <path d="M0 4L7 0L9 1L11 6L16 8V13L8 16L0 12Z" fill="#d9593c" />
            <path d="M7 0L10 2L11 6L16 8L8 11L5 9L4 6L0 4Z" fill="#b9401f" />
            <path d="M8 11L16 8V13L8 16Z" fill="#a2371b" />
          </svg>
        </button>
        <button type="button" aria-label="设置" className="ml-[6px]">
          <svg width="17" height="16" viewBox="0 0 17 16" fill="none">
            <path d="M0 2L4 0L8 2V10L4 12L0 10ZM9 2L13 0L17 2V10L13 12L9 10Z" fill="#dcb36b" />
            <path d="M4 4L8 2V10L4 12ZM13 4L17 2V10L13 12Z" fill="#a37c3d" />
            <path d="M1 7H15" stroke="#222" strokeWidth="2" strokeDasharray="1 1" />
            <circle cx="13" cy="12" r="2.800" fill="#f1f1f1" stroke="#c08c3c" strokeWidth="1.600" />
          </svg>
        </button>
      </div>

      <div className="bg-[#f1f1f1] pt-[2px] pr-[2px] pb-[2px] pl-[3px]">
        <div className="relative">
          <select aria-label="比较对象" className="block h-[22px] w-full appearance-none border border-[#a5a5a5] bg-[#fcfcfc] pl-[2px] text-xs">
            <option>工件</option>
          </select>
          <span className="pointer-events-none absolute top-[10px] right-[5px] border-x-[3px] border-t-[3px] border-x-transparent border-t-[#555]" />
        </div>
      </div>

      <div className="flex-1 bg-white">
        <table className="w-full table-fixed border-collapse border-t border-[#c8c8c8] text-left text-xs">
          <colgroup>
            <col className="w-[44px]" />
            <col className="w-[92px]" />
            <col />
          </colgroup>
          <thead className="bg-[#f1f1f1]">
            <tr className="h-[20px] border-b border-[#d9d9d9] leading-[18px]">
              <th aria-label="颜色" />
              <th className="border-l border-[#d9d9d9] pl-[5px] font-normal">起始</th>
              <th className="border-l border-[#d9d9d9] pl-[5px] font-normal">结束</th>
            </tr>
          </thead>
          <tbody>
            {RANGES.map((range) => (
              <tr key={range.name} className="h-[23px] border-b border-[#d9d9d9] leading-[20px] even:bg-[#f3f3f3] nth-[4n+3]:h-6">
                <td>
                  <button type="button" aria-label={range.name} className="flex items-center gap-[12px] pl-1">
                    <span className={clsx('h-4 w-4 border border-[#a0a0a0]', range.swatch)} />
                    <span className="border-x-[3px] border-t-4 border-x-transparent border-t-black" />
                  </button>
                </td>
                <td className="border-l border-[#d9d9d9] pl-[5px]">{range.start}</td>
                <td className="border-l border-[#d9d9d9] pl-[5px]">{range.end}</td>
              </tr>
            ))}
          </tbody>
        </table>
      </div>

      <div className="flex h-[21px] shrink-0 border-t border-[#c8c8c8] text-xs leading-[20px] text-[#444]">
        <button type="button" className="w-[58px]">移动信息</button>
        <button type="button" className="w-[62px]">碰撞报告</button>
        <button type="button" className="-mt-px w-[36px] border border-t-0 border-[#c8c8c8] bg-white text-[#1b6ec2]">比较</button>
      </div>
    </aside>
  );
}

function PointerArrows() {
  return (
    <svg
      className="pointer-events-none absolute inset-0 h-full w-full"
      viewBox="0 0 1909 1025"
      preserveAspectRatio="none"
      fill="#fd3b37"
      aria-hidden="true"
    >
      <path d="M758 118L777 122L775 126L1271 508L1270 509L770 133L766 137Z" />
      <path d="M1783 187L1765 190L1767 194L1283 521L1284 522L1771 200L1775 203Z" />
    </svg>
  );
}

export default function App() {
  return (
    <div className="relative flex h-screen flex-col overflow-hidden bg-[#f1f1f1] font-['Open_Sans','Noto_Sans_CJK_SC',sans-serif] text-black">
      <TitleBar />
      <TabBar />
      <Ribbon />
      <main className="relative mt-[6px] mb-[6px] flex min-h-0 flex-1 pl-[3px]">
        <div className="relative flex min-w-0 flex-1 flex-col justify-end bg-[#959fa9]">
          <CutterScene />
          <div className="relative flex flex-col">
            <PlaybackBar />
            <Timeline />
          </div>
        </div>
        <ComparePanel />
        <Watermark />
      </main>
      <PointerArrows />
    </div>
  );
}
